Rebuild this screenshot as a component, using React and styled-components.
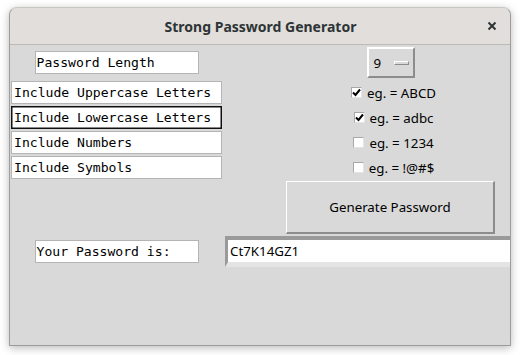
import React from 'react'
import styled, { createGlobalStyle } from 'styled-components'

const GlobalStyle = createGlobalStyle`
  html, body {
    margin: 0;
    padding: 0;
    background: #ffffff;
  }
  body {
    width: 520px;
    height: 355px;
    overflow: hidden;
  }
`

const options = [
  { label: 'Include Uppercase Letters', hint: 'eg. = ABCD', checked: true },
  { label: 'Include Lowercase Letters', hint: 'eg. = adbc', checked: true, focused: true },
  { label: 'Include Numbers', hint: 'eg. = 1234', checked: false },
  { label: 'Include Symbols', hint: 'eg. = !@#$', checked: false }
]

function CheckMark () {
  return (
    <svg width="9" height="9" viewBox="0 0 9 9">
      <path d="M1 4.5 L3.5 7 L8 1.5" fill="none" stroke="#000" strokeWidth="2" />
    </svg>
  )
}

function App () {
  return (
    <>
      <GlobalStyle />
      <Window>
        <TitleBar>
          <Title>Strong Password Generator</Title>
          <CloseButton>
            <svg width="10" height="10" viewBox="0 0 10 10">
              <path d="M1.5 1.5 L8.5 8.5 M8.5 1.5 L1.5 8.5" stroke="#2e3436" strokeWidth="2" />
            </svg>
          </CloseButton>
        </TitleBar>
        <Body>
          <FieldLabel narrow>Password Length</FieldLabel>
          <OptionMenu>
            <span>9</span>
            <Indicator />
          </OptionMenu>

          {options.map((o) => (
            <React.Fragment key={o.label}>
              <FieldLabel focused={o.focused}>{o.label}</FieldLabel>
              <Check>
                <Box>{o.checked && <CheckMark />}</Box>
                <span>{o.hint}</span>
              </Check>
            </React.Fragment>
          ))}

          <Spacer />
          <GenerateButton>Generate Password</GenerateButton>

          <FieldLabel narrow>Your Password is:</FieldLabel>
          <Output>Ct7K14GZ1</Output>
        </Body>
      </Window>
    </>
  )
}

const Window = styled.div`
  margin: 7px 0 0 9px;
  width: 502px;
  height: 339px;
  box-sizing: border-box;
  border: 1px solid #9c9c9c;
  border-top-color: #c9c6c2;
  border-radius: 8px 8px 0 0;
  overflow: hidden;
  display: flex;
  flex-direction: column;
  box-shadow: 0 2px 9px rgba(0, 0, 0, 0.28);
  background: #d9d9d9;
`

const TitleBar = styled.div`
  height: 36px;
  flex: none;
  background: #e1dedb;
  border-bottom: 1px solid #bdb9b5;
  position: relative;
  display: flex;
  align-items: center;
  justify-content: center;
`

const Title = styled.span`
  font-family: "Noto Sans", "DejaVu Sans", sans-serif;
  font-weight: bold;
  font-size: 14px;
  color: #2e3436;
  margin-left: 1px;
`

const CloseButton = styled.span`
  position: absolute;
  right: 13px;
  top: 13px;
  display: flex;
`

const Body = styled.div`
  flex: 1;
  display: grid;
  grid-template-columns: 211px 337px;
  grid-template-rows: 35px 25px 25px 25px 25px 55px 33px;
  align-items: center;
  padding-left: 1px;
`

const FieldLabel = styled.div`
  grid-column: 1;
  justify-self: ${(p) => (p.narrow ? 'center' : 'stretch')};
  width: ${(p) => (p.narrow ? '164px' : 'auto')};
  height: 23px;
  box-sizing: border-box;
  background: #ffffff;
  border: 1px solid ${(p) => (p.focused ? '#111' : '#b4b4b4')};
  box-shadow: ${(p) => (p.focused ? 'inset 0 0 0 0.5px #111' : 'none')};
  padding-left: ${(p) => (p.narrow ? '1px' : '2px')};
  font-family: "DejaVu Sans Mono", "Liberation Mono", monospace;
  font-size: 13.1px;
  line-height: 21px;
  color: #000;
  white-space: nowrap;
`

const OptionMenu = styled.div`
  grid-column: 2;
  justify-self: center;
  width: 48px;
  height: 31px;
  box-sizing: border-box;
  border: 2px solid;
  border-color: #ffffff #8c8c8c #8c8c8c #ffffff;
  display: flex;
  align-items: center;
  padding-left: 5px;
  gap: 13px;
  font-family: "Noto Sans", "DejaVu Sans", sans-serif;
  font-size: 13.3px;
  color: #000;
`

const Indicator = styled.span`
  width: 15px;
  height: 4px;
  box-sizing: border-box;
  border: 1px solid;
  border-color: #ffffff #8c8c8c #8c8c8c #ffffff;
  background: #d9d9d9;
`

const Check = styled.label`
  grid-column: 2;
  justify-self: center;
  padding-left: 6px;
  display: flex;
  align-items: center;
  gap: 5px;
  font-family: "Noto Sans", "DejaVu Sans", sans-serif;
  font-size: 13.3px;
  color: #000;
`

const Box = styled.span`
  width: 11px;
  height: 11px;
  box-sizing: border-box;
  background: #ffffff;
  border: 1px solid;
  border-color: #a8a8a8 #e4e4e4 #e4e4e4 #a8a8a8;
  display: flex;
  align-items: center;
  justify-content: center;
`

const Spacer = styled.div`
  grid-column: 1;
`

const GenerateButton = styled.div`
  grid-column: 2;
  justify-self: center;
  width: 209px;
  height: 53px;
  box-sizing: border-box;
  border: 1px solid;
  border-color: #ffffff #8c8c8c #8c8c8c #ffffff;
  border-width: 1px 2px 2px 1px;
  display: flex;
  align-items: center;
  justify-content: center;
  font-family: "Noto Sans", "DejaVu Sans", sans-serif;
  font-size: 13.3px;
  color: #000;
`

const Output = styled.div`
  grid-column: 2;
  justify-self: start;
  margin-left: 3px;
  width: 330px;
  height: 31px;
  box-sizing: border-box;
  background: #ffffff;
  border: solid;
  border-width: 4px 4px 5px 3px;
  border-color: #9a9a9a #e4e4e4 #e4e4e4 #9a9a9a;
  padding-left: 2px;
  display: flex;
  align-items: center;
  font-family: "Noto Sans", "DejaVu Sans", sans-serif;
  font-size: 13.3px;
  color: #000;
`

export default App
